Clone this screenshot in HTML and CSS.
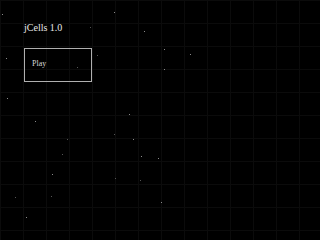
FILE: index.html
```html
<!DOCTYPE html>
<html>
<head>
<meta charset="utf-8">
<title>jCells</title>
<link rel="stylesheet" href="styles.css">
</head>
<body>
<div class="stars">
  <i class="s" style="left:2px;top:14px"></i>
  <i class="s" style="left:114px;top:12px"></i>
  <i class="s dim" style="left:90px;top:27px"></i>
  <i class="s" style="left:144px;top:31px"></i>
  <i class="s" style="left:6px;top:58px"></i>
  <i class="s" style="left:164px;top:49px"></i>
  <i class="s" style="left:190px;top:54px"></i>
  <i class="s dim" style="left:97px;top:55px"></i>
  <i class="s" style="left:164px;top:69px"></i>
  <i class="s dim" style="left:77px;top:67px"></i>
  <i class="s" style="left:7px;top:98px"></i>
  <i class="s" style="left:129px;top:114px"></i>
  <i class="s" style="left:35px;top:121px"></i>
  <i class="s dim" style="left:114px;top:134px"></i>
  <i class="s dim" style="left:67px;top:139px"></i>
  <i class="s" style="left:133px;top:139px"></i>
  <i class="s" style="left:141px;top:156px"></i>
  <i class="s" style="left:158px;top:158px"></i>
  <i class="s dim" style="left:62px;top:154px"></i>
  <i class="s" style="left:52px;top:174px"></i>
  <i class="s dim" style="left:115px;top:178px"></i>
  <i class="s dim" style="left:51px;top:196px"></i>
  <i class="s" style="left:161px;top:202px"></i>
  <i class="s dim" style="left:15px;top:197px"></i>
  <i class="s" style="left:26px;top:217px"></i>
  <i class="s dim" style="left:140px;top:180px"></i>
</div>
<main class="menu">
  <h1 class="title">jCells 1.0</h1>
  <div class="button">Play</div>
</main>
</body>
</html>
```

FILE: styles.css
```css
html, body {
  margin: 0;
  padding: 0;
  width: 200px;
  height: 228px;
  overflow: hidden;
}
body {
  position: relative;
  background-color: #000;
  background-image:
    linear-gradient(to right, #0b0b0b 1px, transparent 1px),
    linear-gradient(to bottom, #0b0b0b 1px, transparent 1px);
  background-size: 23px 23px;
  font-family: "Liberation Serif", "Times New Roman", serif;
}
.stars {
  position: absolute;
  inset: 0;
}
.s {
  position: absolute;
  width: 1px;
  height: 1px;
  background: #8a8a8a;
}
.s.dim {
  background: #555;
}
.menu {
  position: relative;
  display: flex;
  flex-direction: column;
  align-items: flex-start;
  padding: 22px 0 0 24px;
}
.title {
  margin: 0;
  font-size: 10px;
  line-height: 12px;
  font-weight: normal;
  color: #e8e8e8;
}
.button {
  margin-top: 14px;
  box-sizing: border-box;
  width: 68px;
  height: 34px;
  border: 1px solid #b0b0b0;
  padding: 10px 7px;
  font-size: 8px;
  line-height: 10px;
  color: #d8d8d8;
}
```
